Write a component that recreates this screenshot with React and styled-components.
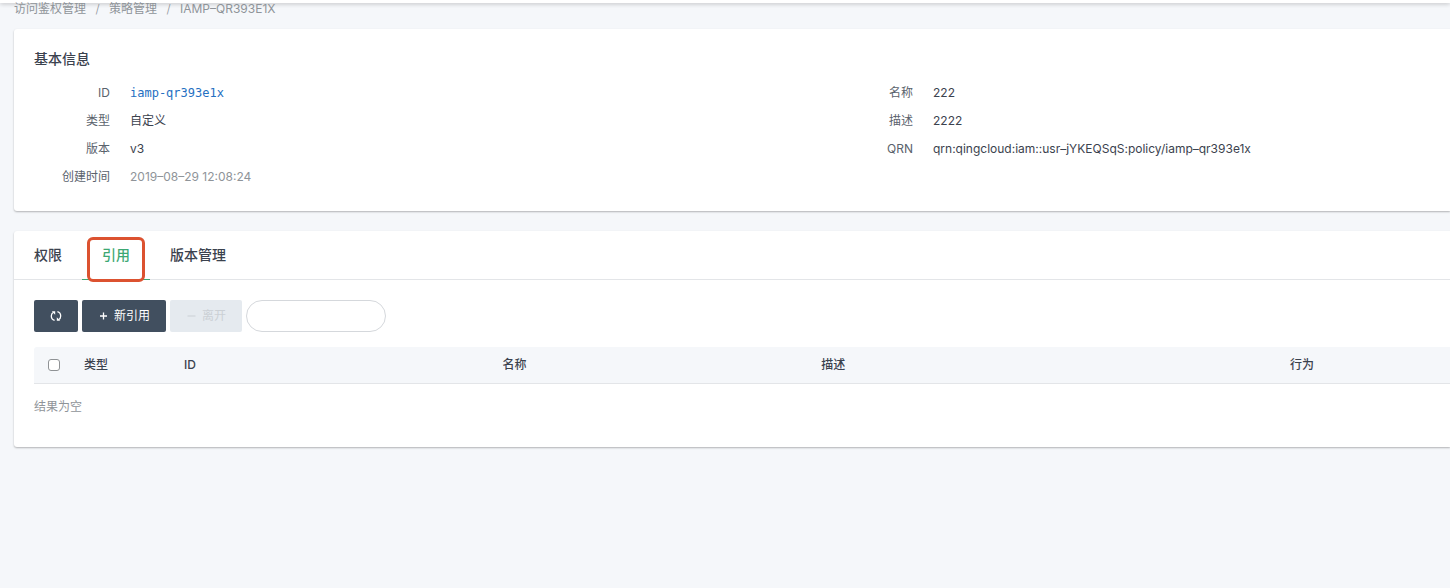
import React from "react";
import styled, { createGlobalStyle } from "styled-components";

const color = {
  page: "#f5f7fa",
  text: "#3b424e",
  dark: "#414f5f",
  label: "#5a626c",
  muted: "#8f9499",
  line: "#e3e5e8",
  green: "#3da873",
  blue: "#2470c2",
  mark: "#dc5230"
};

const GlobalStyle = createGlobalStyle`
  * {
    box-sizing: border-box;
  }

  body {
    margin: 0;
    background-color: ${color.page};
    color: ${color.text};
    font-family: Inter, "Noto Sans CJK SC", sans-serif;
    font-size: 12px;
    line-height: 20px;
  }
`;

const TopBar = styled.header`
  height: 3px;
  background-color: #fff;
  box-shadow: 0 1px 4px rgba(0, 0, 0, 0.24);
`;

const Page = styled.main`
  display: flex;
  flex-direction: column;
  padding-left: 14px;
`;

const Breadcrumb = styled.nav`
  display: flex;
  gap: 9px;
  height: 26px;
  line-height: 12px;
  color: ${color.muted};

  a {
    color: inherit;
    text-decoration: none;
  }
`;

const Slash = styled.span`
  width: 5px;
  text-align: center;
  font-weight: 300;
`;

const Card = styled.section`
  margin-bottom: 20px;
  background-color: #fff;
  border-radius: 3px 0 0 3px;
  box-shadow: 0 1px 2px rgba(0, 0, 0, 0.28);
`;

const Info = styled.div`
  padding: 20px 0 20px 20px;
`;

const Title = styled.h2`
  margin: 0 0 10px;
  font-size: 14px;
  font-weight: 500;
`;

const InfoGrid = styled.div`
  display: grid;
  grid-template-columns: 1.31fr 1fr;
`;

const InfoList = styled.dl`
  margin: 0;
`;

const InfoRow = styled.div`
  display: flex;
  gap: 20px;
  height: 28px;
  line-height: 28px;
`;

const InfoLabel = styled.dt`
  width: 76px;
  text-align: right;
  color: ${color.label};
`;

const InfoValue = styled.dd`
  margin: 0;
  color: ${({ $muted }) => ($muted ? color.muted : color.text)};
`;

const IdLink = styled.a`
  font-family: "DejaVu Sans Mono", monospace;
  color: ${color.blue};
  text-decoration: none;
`;

const Tabs = styled.div`
  display: flex;
  height: 49px;
  border-bottom: 1px solid ${color.line};
`;

const Tab = styled.button`
  position: relative;
  height: 49px;
  padding: 0 20px;
  border: 0;
  border-bottom: 1px solid
    ${({ $active }) => ($active ? color.green : "transparent")};
  background: none;
  font: inherit;
  font-size: 14px;
  font-weight: 500;
  color: ${({ $active }) => ($active ? color.green : color.text)};
`;

const Mark = styled.span`
  position: absolute;
  top: 6px;
  right: 5px;
  bottom: -3px;
  left: 5px;
  border: 3px solid ${color.mark};
  border-radius: 6px;
`;

const Panel = styled.div`
  padding: 20px 0 17px 20px;
`;

const Toolbar = styled.div`
  display: flex;
  gap: 4px;
  margin-bottom: 15px;
`;

const Button = styled.button`
  display: flex;
  align-items: center;
  gap: 6px;
  height: 32px;
  padding: 0 16px;
  border: 0;
  border-radius: 2px;
  background-color: ${color.dark};
  font: inherit;
  color: #fff;

  &:disabled {
    background-color: #e5eaef;
    color: #cbd0d5;
  }
`;

const Search = styled.input`
  width: 140px;
  height: 32px;
  padding: 0 16px;
  border: 1px solid #d5d8dc;
  border-radius: 16px;
  background-color: #fff;
  font: inherit;
  outline: none;
`;

const Table = styled.table`
  width: 100%;
  table-layout: fixed;
  border-collapse: separate;
  border-spacing: 0;
`;

const HeadCell = styled.th`
  width: ${({ $width }) => $width};
  height: 37px;
  padding: 0 10px;
  border-bottom: 1px solid ${color.line};
  background-color: ${color.page};
  font-weight: 500;
  text-align: left;
`;

const CheckCell = styled(HeadCell)`
  padding: 0 14px;
  border-top-left-radius: 3px;
`;

const CheckBox = styled.input`
  display: block;
  width: 12px;
  height: 12px;
  margin: 0;
  appearance: none;
  border: 1px solid #8f9295;
  border-radius: 3px;
  background-color: #fff;

  &:checked {
    background-color: ${color.dark};
  }
`;

const EmptyCell = styled.td`
  height: 46px;
  padding: 0;
  color: ${color.muted};
`;

const RefreshIcon = () => (
  <svg width="12" height="12" viewBox="0 0 12 12" fill="none" stroke="#fff">
    <path d="M4.6 10.4C2.4 9.8 1.3 7.9 1.3 6c0-1.6.8-3 2.2-3.8" strokeWidth="1.3" />
    <path d="M7.4 1.6c2.2.6 3.3 2.5 3.3 4.4 0 1.6-.8 3-2.2 3.8" strokeWidth="1.3" />
    <path d="M1.8 1.3h3.4v3.4z" fill="#fff" stroke="none" />
    <path d="M10.2 10.7H6.8V7.3z" fill="#fff" stroke="none" />
  </svg>
);

const PlusIcon = () => (
  <svg width="10" height="10" viewBox="0 0 10 10" stroke="currentColor">
    <path d="M5.5 1.5v7M2 5h7" strokeWidth="1.3" />
  </svg>
);

const MinusIcon = () => (
  <svg width="10" height="10" viewBox="0 0 10 10" stroke="currentColor">
    <path d="M1.5 5h8" />
  </svg>
);

const leftInfo = [
  { label: "ID", value: <IdLink href="#id">iamp-qr393e1x</IdLink> },
  { label: "类型", value: "自定义" },
  { label: "版本", value: "v3" },
  { label: "创建时间", value: "2019–08–29 12:08:24", muted: true }
];

const rightInfo = [
  { label: "名称", value: "222" },
  { label: "描述", value: "2222" },
  { label: "QRN", value: "qrn:qingcloud:iam::usr–jYKEQSqS:policy/iamp–qr393e1x" }
];

const tabs = ["权限", "引用", "版本管理"];

const columns = [
  { name: "类型", width: "100px" },
  { name: "ID", width: "22.5%" },
  { name: "名称", width: "22.5%" },
  { name: "描述", width: "33.1%" },
  { name: "行为", width: "auto" }
];

const InfoColumn = ({ items }) => (
  <InfoList>
    {items.map(({ label, value, muted }) => (
      <InfoRow key={label}>
        <InfoLabel>{label}</InfoLabel>
        <InfoValue $muted={muted}>{value}</InfoValue>
      </InfoRow>
    ))}
  </InfoList>
);

const App = () => {
  const [current, setCurrent] = React.useState("引用");

  return (
    <>
      <GlobalStyle />
      <TopBar />
      <Page>
        <Breadcrumb>
          <a href="#iam">访问鉴权管理</a>
          <Slash>/</Slash>
          <a href="#policy">策略管理</a>
          <Slash>/</Slash>
          <span>IAMP–QR393E1X</span>
        </Breadcrumb>
        <Card>
          <Info>
            <Title>基本信息</Title>
            <InfoGrid>
              <InfoColumn items={leftInfo} />
              <InfoColumn items={rightInfo} />
            </InfoGrid>
          </Info>
        </Card>
        <Card>
          <Tabs role="tablist">
            {tabs.map(name => (
              <Tab
                key={name}
                role="tab"
                aria-selected={name === current}
                $active={name === current}
                onClick={() => setCurrent(name)}
              >
                {name}
                {name === current && <Mark />}
              </Tab>
            ))}
          </Tabs>
          <Panel>
            <Toolbar>
              <Button aria-label="刷新">
                <RefreshIcon />
              </Button>
              <Button>
                <PlusIcon />
                新引用
              </Button>
              <Button disabled>
                <MinusIcon />
                离开
              </Button>
              <Search type="text" aria-label="搜索" />
            </Toolbar>
            <Table>
              <thead>
                <tr>
                  <CheckCell $width="40px">
                    <CheckBox type="checkbox" aria-label="全选" />
                  </CheckCell>
                  {columns.map(({ name, width }) => (
                    <HeadCell key={name} $width={width}>
                      {name}
                    </HeadCell>
                  ))}
                </tr>
              </thead>
              <tbody>
                <tr>
                  <EmptyCell colSpan={6}>结果为空</EmptyCell>
                </tr>
              </tbody>
            </Table>
          </Panel>
        </Card>
      </Page>
    </>
  );
};

export default App;
